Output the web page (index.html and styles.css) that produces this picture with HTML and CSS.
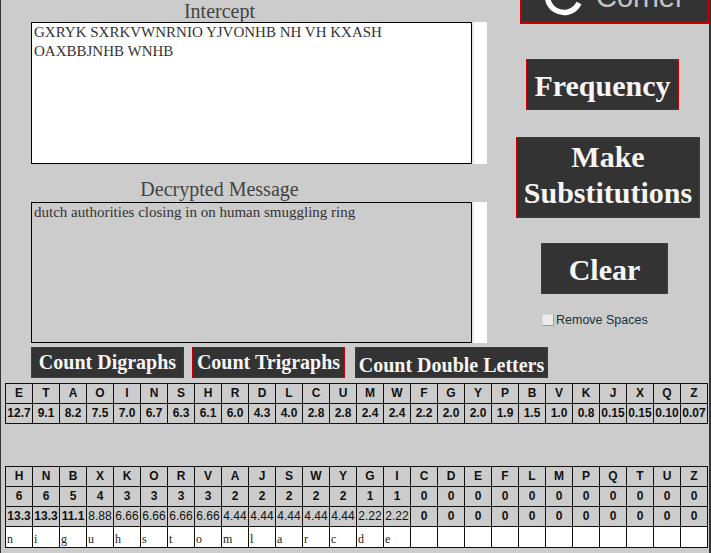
FILE: index.html
```html
<!DOCTYPE html>
<html lang="en">
<head>
<meta charset="utf-8">
<title>Cryptogram Solver</title>
<link rel="stylesheet" href="styles.css">
</head>
<body>
<div class="page">
  <div class="top">
    <div class="left">
      <h2 class="title">Intercept</h2>
      <div class="field">
        <div class="box box-white">GXRYK SXRKVWNRNIO YJVONHB NH VH KXASH OAXBBJNHB WNHB</div>
        <div class="track"></div>
      </div>
      <h2 class="title title-second">Decrypted Message</h2>
      <div class="field field-second">
        <div class="box">dutch authorities closing in on human smuggling ring</div>
        <div class="track"></div>
      </div>
    </div>
    <div class="right">
      <a class="corner">
        <svg class="logo" width="44" height="40" viewBox="0 0 44 40"><path d="M36.95 26.97A16.5 16.5 0 1 1 33.67 8.33" fill="none" stroke="#fff" stroke-width="5.5"/></svg>
        <span class="corner-text">Corner</span>
      </a>
      <button class="btn-big btn-freq">Frequency</button>
      <button class="btn-big btn-make">Make Substitutions</button>
      <button class="btn-big btn-clear">Clear</button>
      <label class="check"><input type="checkbox" class="check-box"><span class="check-label">Remove Spaces</span></label>
    </div>
  </div>
  <div class="actions">
    <button class="btn-small btn-di">Count Digraphs</button>
    <button class="btn-small btn-tri">Count Trigraphs</button>
    <button class="btn-small btn-double">Count Double Letters</button>
  </div>
  <div class="grid grid-freq">
    <div class="c">E</div><div class="c">T</div><div class="c">A</div><div class="c">O</div><div class="c">I</div><div class="c">N</div><div class="c">S</div><div class="c">H</div><div class="c">R</div><div class="c">D</div><div class="c">L</div><div class="c">C</div><div class="c">U</div><div class="c">M</div><div class="c">W</div><div class="c">F</div><div class="c">G</div><div class="c">Y</div><div class="c">P</div><div class="c">B</div><div class="c">V</div><div class="c">K</div><div class="c">J</div><div class="c">X</div><div class="c">Q</div><div class="c">Z</div>
    <div class="c">12.7</div><div class="c">9.1</div><div class="c">8.2</div><div class="c">7.5</div><div class="c">7.0</div><div class="c">6.7</div><div class="c">6.3</div><div class="c">6.1</div><div class="c">6.0</div><div class="c">4.3</div><div class="c">4.0</div><div class="c">2.8</div><div class="c">2.8</div><div class="c">2.4</div><div class="c">2.4</div><div class="c">2.2</div><div class="c">2.0</div><div class="c">2.0</div><div class="c">1.9</div><div class="c">1.5</div><div class="c">1.0</div><div class="c">0.8</div><div class="c">0.15</div><div class="c">0.15</div><div class="c">0.10</div><div class="c">0.07</div>
  </div>
  <div class="grid grid-count">
    <div class="c">H</div><div class="c">N</div><div class="c">B</div><div class="c">X</div><div class="c">K</div><div class="c">O</div><div class="c">R</div><div class="c">V</div><div class="c">A</div><div class="c">J</div><div class="c">S</div><div class="c">W</div><div class="c">Y</div><div class="c">G</div><div class="c">I</div><div class="c">C</div><div class="c">D</div><div class="c">E</div><div class="c">F</div><div class="c">L</div><div class="c">M</div><div class="c">P</div><div class="c">Q</div><div class="c">T</div><div class="c">U</div><div class="c">Z</div>
    <div class="c">6</div><div class="c">6</div><div class="c">5</div><div class="c">4</div><div class="c">3</div><div class="c">3</div><div class="c">3</div><div class="c">3</div><div class="c">2</div><div class="c">2</div><div class="c">2</div><div class="c">2</div><div class="c">2</div><div class="c">1</div><div class="c">1</div><div class="c">0</div><div class="c">0</div><div class="c">0</div><div class="c">0</div><div class="c">0</div><div class="c">0</div><div class="c">0</div><div class="c">0</div><div class="c">0</div><div class="c">0</div><div class="c">0</div>
    <div class="c">13.3</div><div class="c">13.3</div><div class="c">11.1</div><div class="c c-thin">8.88</div><div class="c c-thin">6.66</div><div class="c c-thin">6.66</div><div class="c c-thin">6.66</div><div class="c c-thin">6.66</div><div class="c c-thin">4.44</div><div class="c c-thin">4.44</div><div class="c c-thin">4.44</div><div class="c c-thin">4.44</div><div class="c c-thin">4.44</div><div class="c c-thin">2.22</div><div class="c c-thin">2.22</div><div class="c">0</div><div class="c">0</div><div class="c">0</div><div class="c">0</div><div class="c">0</div><div class="c">0</div><div class="c">0</div><div class="c">0</div><div class="c">0</div><div class="c">0</div><div class="c">0</div>
    <div class="c c-in">n</div><div class="c c-in">i</div><div class="c c-in">g</div><div class="c c-in">u</div><div class="c c-in">h</div><div class="c c-in">s</div><div class="c c-in">t</div><div class="c c-in">o</div><div class="c c-in">m</div><div class="c c-in">l</div><div class="c c-in">a</div><div class="c c-in">r</div><div class="c c-in">c</div><div class="c c-in">d</div><div class="c c-in">e</div><div class="c c-in"></div><div class="c c-in"></div><div class="c c-in"></div><div class="c c-in"></div><div class="c c-in"></div><div class="c c-in"></div><div class="c c-in"></div><div class="c c-in"></div><div class="c c-in"></div><div class="c c-in"></div><div class="c c-in"></div>
  </div>
</div>
</body>
</html>
```
FILE: styles.css
```css
html, body {
  margin: 0;
  padding: 0;
}
body {
  background: #cccccc;
  height: 553px;
  overflow: hidden;
  font-family: "Liberation Serif", "Times New Roman", serif;
}
.page {
  box-sizing: border-box;
  height: 553px;
  border-left: 1px solid #333;
  border-right: 2px solid #333;
}
.top {
  display: flex;
  align-items: flex-start;
}
.left {
  width: 487px;
  flex: none;
}
.title {
  margin: 0;
  width: 437px;
  text-align: center;
  font-weight: normal;
  font-size: 20px;
  line-height: 22px;
  color: #444;
}
.title-second {
  margin-top: 14px;
  margin-bottom: 2px;
}
.field {
  display: flex;
  margin-left: 30px;
  height: 142px;
}
.field-second {
  height: 141px;
}
.box {
  box-sizing: border-box;
  width: 441px;
  height: 100%;
  border: 1px solid #000;
  padding: 0 2px;
  font-size: 15px;
  line-height: 19px;
  color: #333;
  overflow: hidden;
}
.box-white {
  background: #fff;
}
.track {
  width: 15px;
  height: 100%;
  background: #fff;
  box-shadow: inset 2px 0 0 #e6e6e6;
}
.right {
  flex: 1;
  display: flex;
  flex-direction: column;
  align-items: flex-start;
}
.corner {
  box-sizing: border-box;
  display: flex;
  align-items: flex-end;
  width: 189px;
  height: 64px;
  margin: -40px 0 0 32px;
  padding: 0 0 6px 21px;
  background: #333;
  border: 1px solid #c00;
  border-bottom-width: 2px;
}
.logo {
  display: block;
  flex: none;
}
.corner-text {
  margin: 0 0 4px 10px;
  font-family: "Liberation Sans", Arial, sans-serif;
  font-size: 29px;
  line-height: 29px;
  color: #c4c4c4;
}
.btn-big, .btn-small {
  box-sizing: border-box;
  display: block;
  margin: 0;
  background: #333;
  border: 1px solid #c00;
  color: #f6f6f6;
  font-family: "Liberation Serif", "Times New Roman", serif;
  font-weight: bold;
  text-align: center;
  white-space: normal;
  cursor: pointer;
}
.btn-big {
  font-size: 30px;
  padding: 3px 0 0;
  height: 51px;
  line-height: 46px;
}
.btn-freq {
  width: 153px;
  margin: 35px 0 0 38px;
}
.btn-make {
  width: 184px;
  height: 81px;
  line-height: 36px;
  padding: 1px 0 6px;
  margin: 27px 0 0 28px;
}
.btn-clear {
  width: 127px;
  margin: 25px 0 0 53px;
}
.check {
  display: flex;
  align-items: center;
  height: 12px;
  margin: 20px 0 0 54px;
}
.check-label {
  font-family: "Liberation Sans", Arial, sans-serif;
  font-size: 12.5px;
  line-height: 14px;
  color: #17333a;
  white-space: nowrap;
}
.check-box {
  appearance: none;
  -webkit-appearance: none;
  box-sizing: border-box;
  flex: none;
  width: 12px;
  height: 12px;
  margin: 0 2px 0 0;
  background: #ececec;
  border: 1px solid;
  border-color: #d6d6d6 #9c9c9c #9c9c9c #d6d6d6;
}
.actions {
  display: flex;
  gap: 8px;
  margin: 4px 0 0 30px;
}
.btn-small {
  height: 31px;
  padding: 0;
  font-size: 20px;
  line-height: 29px;
  white-space: nowrap;
}
.btn-di, .btn-tri {
  width: 153px;
}
.btn-double {
  width: 193px;
  margin-left: 2px;
  padding-top: 6px;
  line-height: 23px;
}
.grid {
  display: grid;
  grid-template-columns: repeat(26, 26px);
  gap: 1px;
  width: max-content;
  margin-left: 4px;
  background: #111;
  border: 1px solid #111;
}
.grid-freq {
  margin-top: 5px;
}
.grid-count {
  margin-top: 42px;
}
.c {
  height: 19px;
  background: #cccccc;
  color: #111;
  font-family: "Liberation Sans", Arial, sans-serif;
  font-weight: bold;
  font-size: 12px;
  line-height: 19px;
  text-align: center;
  white-space: nowrap;
  overflow: hidden;
}
.c-thin {
  font-weight: normal;
}
.c-in {
  box-sizing: border-box;
  height: 20px;
  padding: 5px 0 0 1px;
  background: #fff;
  font-family: "Liberation Serif", "Times New Roman", serif;
  font-weight: normal;
  font-size: 12px;
  line-height: 14px;
  text-align: left;
  color: #222;
}
```
